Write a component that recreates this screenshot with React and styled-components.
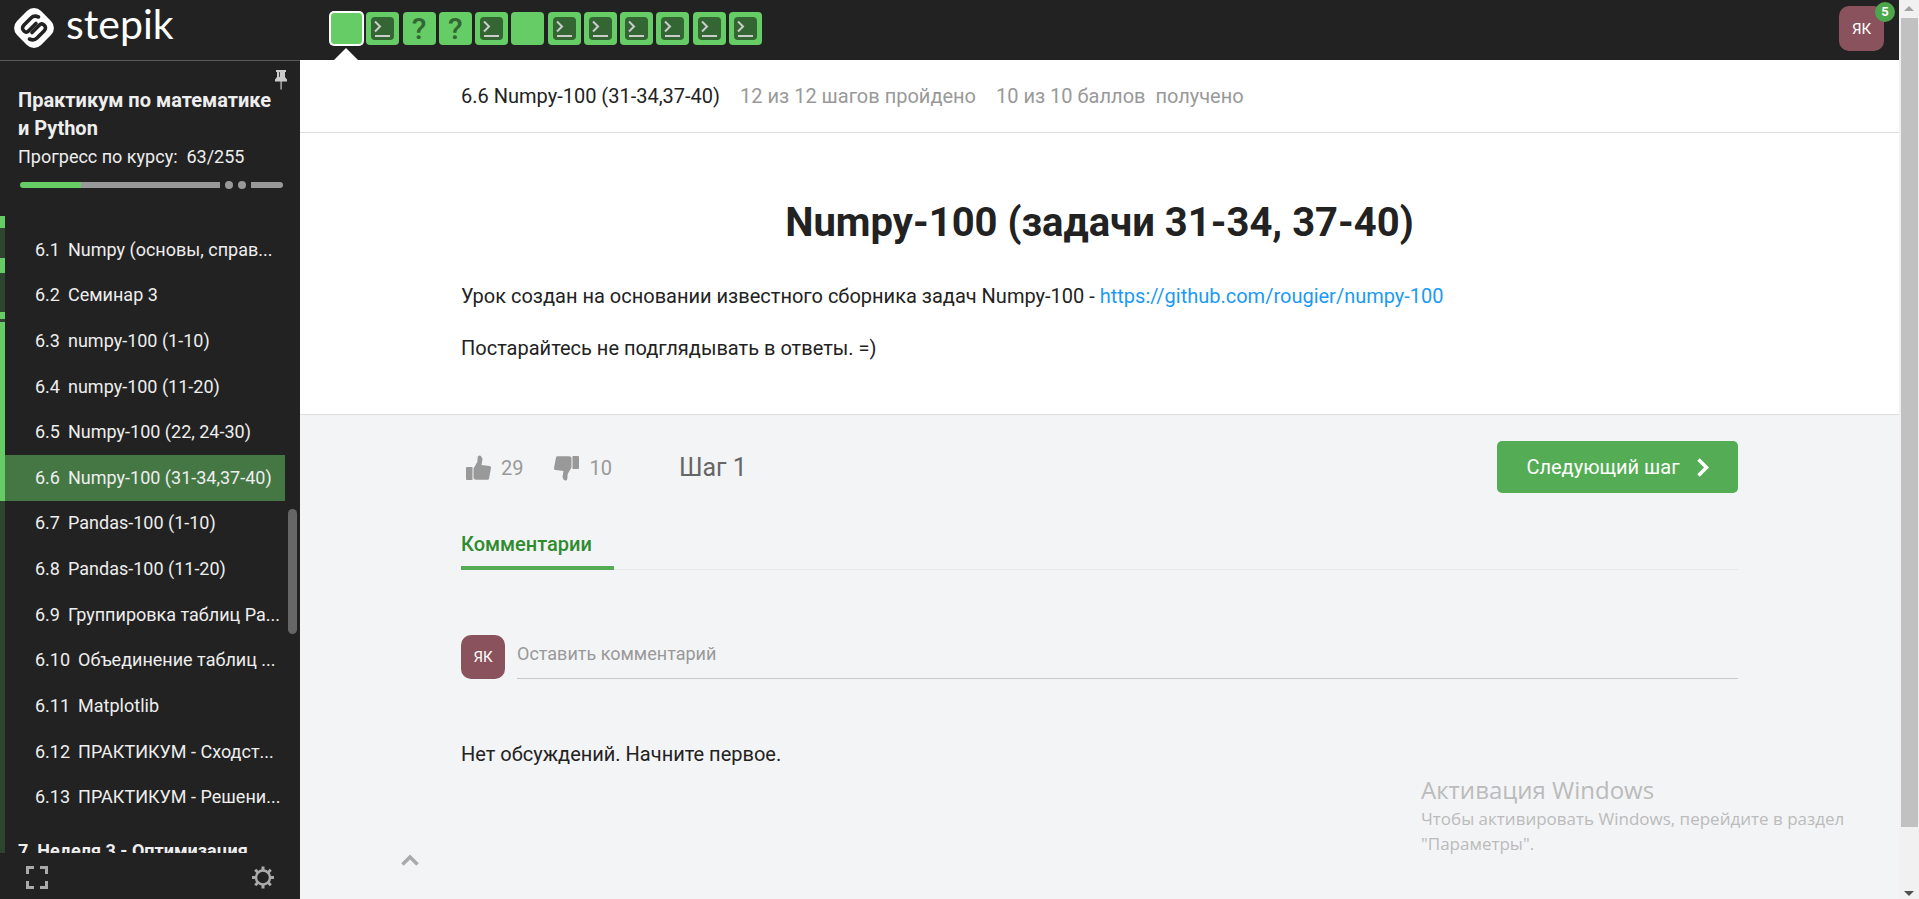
import React from "react";
import styled, { createGlobalStyle, css } from "styled-components";

const GlobalStyle = createGlobalStyle`
  *, *::before, *::after { box-sizing: border-box; }
  body { margin: 0; background: #f3f4f6; color: #222; font: 400 20px/32px Roboto, "Open Sans", sans-serif; }
  button, input { font: inherit; color: inherit; border: 0; background: none; padding: 0; margin: 0; }
  button { cursor: pointer; }
  h1, h2, p, ol { margin: 0; padding: 0; }
  a { text-decoration: none; color: inherit; }
`;

const Page = styled.div`
  display: grid;
  grid-template-columns: 300px minmax(0, 1fr) 20px;
  grid-template-rows: 60px minmax(0, 1fr);
  height: 100vh;
`;

const TopBar = styled.header`
  grid-column: 1 / 3;
  display: flex;
  align-items: flex-start;
  background: #222;
`;

const LogoLink = styled.a`
  display: flex;
  gap: 12px;
  width: 300px;
  padding: 8px 14px;
  color: #fff;
`;

const Wordmark = styled.span`
  font: 400 41px/32px Lato, sans-serif;
`;

const Steps = styled.nav`
  display: flex;
  justify-content: space-between;
  width: 432px;
  margin: 12px 0 0 30px;
`;

const StepLink = styled.a`
  position: relative;
  display: flex;
  align-items: center;
  justify-content: center;
  width: 33px;
  height: 33px;
  border-radius: 4px;
  background: #66cc66;
  color: #336633;
  font-size: 30px;
  font-weight: 500;
  ${(p) =>
    p.$current &&
    css`
      border: 1px solid #fff;
      box-shadow: 0 0 0 1px #fff;
      &::after {
        content: "";
        position: absolute;
        top: 35px;
        left: 3px;
        border: solid transparent;
        border-width: 0 12px 12px;
        border-bottom-color: #fff;
      }
    `}
`;

const Avatar = styled.span`
  position: relative;
  flex: none;
  display: flex;
  align-items: center;
  justify-content: center;
  width: ${(p) => p.$size}px;
  height: ${(p) => p.$size}px;
  border-radius: 10px;
  background: #8a525c;
  color: #fff;
  font-size: 15px;
`;

const ProfileButton = styled.button`
  margin: 6px 15px 0 auto;
`;

const Badge = styled.span`
  position: absolute;
  top: -4px;
  right: -11px;
  width: 20px;
  height: 20px;
  border-radius: 50%;
  background: #4ca64c;
  font-size: 13px;
  line-height: 20px;
  font-weight: 700;
  text-align: center;
`;

const Sidebar = styled.aside`
  display: flex;
  flex-direction: column;
  min-height: 0;
  border-top: 1px solid #5a5a5a;
  background: #222;
  color: #eee;
  font-size: 18px;
`;

const CourseHead = styled.div`
  position: relative;
  padding: 25px 17px 0 18px;
`;

const CourseTitle = styled.h2`
  font-size: 20px;
  line-height: 28px;
  font-weight: 700;
`;

const CourseProgress = styled.p`
  margin-top: 1px;
  line-height: 28px;
`;

const PinButton = styled.button`
  position: absolute;
  top: 9px;
  right: 13px;
  display: flex;
`;

const Meter = styled.div`
  display: flex;
  align-items: center;
  gap: 5px;
  height: 8px;
  margin: 10px 0 27px 2px;
`;

const MeterPart = styled.span`
  flex: ${(p) => (p.$width ? "none" : 1)};
  width: ${(p) => p.$width || 0}px;
  height: 6px;
  border-radius: ${(p) => p.$radius};
  background: ${(p) =>
    p.$done ? "linear-gradient(90deg, #66cc66 61px, #999 61px)" : "#999"};
`;

const MeterDot = styled.span`
  width: 8px;
  height: 8px;
  border-radius: 50%;
  background: #999;
`;

const Contents = styled.div`
  position: relative;
  flex: 1;
  display: flex;
  min-height: 0;
  overflow: hidden;
`;

const Strip = styled.div`
  flex: none;
  display: flex;
  flex-direction: column;
  width: 5px;
`;

const StripPart = styled.span`
  flex: ${(p) => (p.$height ? "none" : 1)};
  height: ${(p) => p.$height || 0}px;
  background: ${(p) => (p.$done ? "#66cc66" : "#2f442f")};
`;

const Outline = styled.div`
  flex: 1;
  padding: 11px 15px 0 0;
`;

const Lessons = styled.ol`
  display: grid;
  grid-template-rows: repeat(13, 1fr);
  height: 593px;
  list-style: none;
`;

const LessonLink = styled.a`
  display: flex;
  align-items: center;
  gap: 8px;
  height: 100%;
  padding-left: 30px;
  white-space: nowrap;
  background: ${(p) => (p.$current ? "#457745" : "transparent")};
`;

const Week = styled.h2`
  margin: 17px 0 0 13px;
  font-size: 18px;
  line-height: 28px;
  font-weight: 700;
  white-space: pre;
`;

const SideThumb = styled.div`
  position: absolute;
  top: 293px;
  right: 3px;
  width: 9px;
  height: 125px;
  border-radius: 5px;
  background: #666;
`;

const SideFoot = styled.div`
  display: flex;
  justify-content: space-between;
  align-items: center;
  height: 46px;
  padding: 2px 26px 0;
  button { display: flex; }
`;

const Main = styled.main`
  position: relative;
  min-width: 0;
  overflow: hidden;
`;

const Wrap = styled.div`
  width: calc(100% - 40px);
  max-width: 1277px;
  margin: 0 auto;
`;

const LessonBar = styled.section`
  background: #fff;
  border-bottom: 1px solid #ddd;
`;

const LessonInfo = styled(Wrap)`
  display: flex;
  align-items: center;
  gap: 20px;
  height: 72px;
`;

const Muted = styled.span`
  color: #999;
  white-space: pre;
`;

const Article = styled.article`
  padding: 66px 0 50px;
  background: #fff;
  border-bottom: 1px solid #ddd;
  p + p { margin-top: 20px; }
`;

const Title = styled.h1`
  margin-bottom: 33px;
  font-size: 40px;
  line-height: 48px;
  font-weight: 700;
  text-align: center;
`;

const TextLink = styled.a`
  color: #1a9af5;
`;

const Actions = styled.div`
  display: flex;
  align-items: center;
  padding-top: 26px;
`;

const Vote = styled.button`
  display: flex;
  align-items: center;
  gap: 10px;
  margin: 0 26px 0 5px;
  padding-top: 2px;
  color: #999;
`;

const StepLabel = styled.span`
  margin-left: 41px;
  padding-top: 2px;
  color: #666;
  font-size: 25px;
`;

const NextButton = styled.button`
  display: flex;
  align-items: center;
  justify-content: center;
  gap: 17px;
  width: 241px;
  height: 52px;
  margin-left: auto;
  border-radius: 5px;
  background: #54ad54;
  color: #fff;
`;

const Tabs = styled.div`
  display: flex;
  margin-top: 39px;
  box-shadow: inset 0 -1px #e6e7e9;
`;

const Tab = styled.button`
  width: 153px;
  padding-bottom: 10px;
  border-bottom: 4px solid #54ad54;
  color: #2e8b2e;
  font-weight: 500;
  line-height: 24px;
  text-align: left;
`;

const CommentForm = styled.form`
  display: flex;
  gap: 12px;
  margin-top: 65px;
`;

const CommentInput = styled.input`
  flex: 1;
  min-width: 0;
  height: 44px;
  padding-bottom: 7px;
  border-bottom: 1px solid #c8c9cb;
  border-radius: 0;
  font-size: 18px;
  &::placeholder { color: #999; opacity: 1; }
`;

const Empty = styled.p`
  margin-top: 63px;
  line-height: 24px;
`;

const ToTop = styled.button`
  position: absolute;
  left: 101px;
  bottom: 33px;
  display: flex;
`;

const Watermark = styled.div`
  position: absolute;
  right: 40px;
  bottom: 43px;
  width: 438px;
  color: #bbb;
  font: 400 17px/25px "Open Sans", "Noto Sans", sans-serif;
  pointer-events: none;
`;

const WatermarkTitle = styled.div`
  font-size: 24px;
  line-height: 33px;
`;

const PageScroll = styled.div`
  grid-column: 3;
  grid-row: 1 / 3;
  display: flex;
  flex-direction: column;
  justify-content: space-between;
  align-items: center;
  background: #f1f1f1;
`;

const ScrollThumb = styled.div`
  width: 17px;
  height: 90%;
  margin-bottom: auto;
  background: #c1c1c1;
`;

const ScrollArrow = styled.svg`
  flex: none;
  width: 20px;
  height: 18px;
  fill: ${(p) => p.$color};
`;

function Logo() {
  return (
    <svg width="40" height="40" viewBox="0 0 40 40" aria-hidden="true">
      <rect x="3" y="3" width="34" height="34" rx="10" fill="#fff" transform="rotate(45 20 20)" />
      <g fill="none" stroke="#222" strokeWidth="3.6" strokeLinecap="round" strokeLinejoin="round">
        <path d="M24.500 9 Q20 7 17 10 L10 17 Q7 20.500 10 23 Q12.500 25.500 15 22.500 L22 15.500" />
        <path d="M15.500 31 Q20 33 23 30 L30 23 Q33 19.500 30 17 Q27.500 14.500 25 17.500 L18 24.500" />
      </g>
    </svg>
  );
}

function PromptIcon() {
  return (
    <svg width="23" height="23" viewBox="0 0 23 23" aria-hidden="true">
      <rect width="23" height="23" rx="4" fill="#336633" />
      <path d="M4 4.5 L9 9.5 L4 14.5" fill="none" stroke="#ccc" strokeWidth="2" />
      <path d="M4 19 H19" stroke="#ccc" strokeWidth="2" />
    </svg>
  );
}

function ThumbIcon({ down }) {
  return (
    <svg width="25" height="26" viewBox="0 0 25 26" fill="#999" aria-hidden="true">
      <g transform={down ? "rotate(180 12.5 13)" : undefined}>
        <path d="M1 12 H6.500 V25 H1 Q0 25 0 24 V13 Q0 12 1 12Z" />
        <path d="M7.500 13.500 L11.300 7 L11.700 2 Q12 .5 13.500 .5 Q15.500 .5 16.500 4 L15.500 10 L23.500 11 Q25.200 11.300 25 13 L23 23.500 Q22.700 24.800 21.500 24.800 H10 Q7.500 24.800 7.500 23Z" />
      </g>
    </svg>
  );
}

function PinIcon() {
  return (
    <svg width="12" height="20" viewBox="0 0 12 20" fill="#ccc" aria-hidden="true">
      <path d="M1 0 H11 V2 H10 V7 L12 9.500 V11.500 H0 V9.500 L2 7 V2 H1Z" />
      <path d="M5.500 11 H6.700 V19.500 H5.500Z" />
      <path d="M4 2 H5 V7 H4Z" fill="#444" />
    </svg>
  );
}

function FullscreenIcon() {
  return (
    <svg width="22" height="23" viewBox="0 0 22 23" fill="none" stroke="#aaa" strokeWidth="3" aria-hidden="true">
      <path d="M1.500 8 V1.500 H8 M14 1.500 H20.500 V8 M20.500 15 V21.500 H14 M8 21.500 H1.500 V15" />
    </svg>
  );
}

function GearIcon() {
  return (
    <svg width="22" height="23" viewBox="0 0 22 23" fill="none" stroke="#aaa" aria-hidden="true">
      <circle cx="11" cy="11.500" r="7" strokeWidth="2.500" />
      {[0, 45, 90, 135, 180, 225, 270, 315].map((a) => (
        <path key={a} d="M11 .5 V4" strokeWidth="3" transform={`rotate(${a} 11 11.500)`} />
      ))}
    </svg>
  );
}

const steps = ["text", "code", "quiz", "quiz", "code", "text", "code", "code", "code", "code", "code", "code"];

const lessons = [
  ["6.1", "Numpy (основы, справ..."],
  ["6.2", "Семинар 3"],
  ["6.3", "numpy-100 (1-10)"],
  ["6.4", "numpy-100 (11-20)"],
  ["6.5", "Numpy-100 (22, 24-30)"],
  ["6.6", "Numpy-100 (31-34,37-40)"],
  ["6.7", "Pandas-100 (1-10)"],
  ["6.8", "Pandas-100 (11-20)"],
  ["6.9", "Группировка таблиц Pa..."],
  ["6.10", "Объединение таблиц ..."],
  ["6.11", "Matplotlib"],
  ["6.12", "ПРАКТИКУМ - Сходст..."],
  ["6.13", "ПРАКТИКУМ - Решени..."],
];

const strip = [
  [12, true],
  [30, false],
  [15, true],
  [39, false],
  [7, true],
  [3, false],
  [179, true],
  [0, false],
];

export default function App() {
  return (
    <Page>
      <GlobalStyle />
      <TopBar>
        <LogoLink href="#home">
          <Logo />
          <Wordmark>stepik</Wordmark>
        </LogoLink>
        <Steps aria-label="Шаги урока">
          {steps.map((kind, i) => (
            <StepLink key={i} href={`#step-${i + 1}`} $current={i === 0} aria-label={`Шаг ${i + 1}`}>
              {kind === "code" && <PromptIcon />}
              {kind === "quiz" && "?"}
            </StepLink>
          ))}
        </Steps>
        <ProfileButton aria-label="Профиль">
          <Avatar $size={45}>
            ЯК<Badge>5</Badge>
          </Avatar>
        </ProfileButton>
      </TopBar>

      <Sidebar>
        <CourseHead>
          <CourseTitle>Практикум по математике и Python</CourseTitle>
          <PinButton aria-label="Закрепить">
            <PinIcon />
          </PinButton>
          <CourseProgress>Прогресс по курсу: &nbsp;63/255</CourseProgress>
          <Meter>
            <MeterPart $done $radius="3px 0 0 3px" />
            <MeterDot />
            <MeterDot />
            <MeterPart $width={32} $radius="0 3px 3px 0" />
          </Meter>
        </CourseHead>
        <Contents>
          <Strip>
            {strip.map(([height, done], i) => (
              <StripPart key={i} $height={height} $done={done} />
            ))}
          </Strip>
          <Outline>
            <Lessons>
              {lessons.map(([number, name]) => (
                <li key={number}>
                  <LessonLink href={`#lesson-${number}`} $current={number === "6.6"}>
                    <span>{number}</span>
                    <span>{name}</span>
                  </LessonLink>
                </li>
              ))}
            </Lessons>
            <Week>7  Неделя 3 - Оптимизация</Week>
          </Outline>
          <SideThumb />
        </Contents>
        <SideFoot>
          <button aria-label="Полный экран">
            <FullscreenIcon />
          </button>
          <button aria-label="Настройки">
            <GearIcon />
          </button>
        </SideFoot>
      </Sidebar>

      <Main>
        <LessonBar>
          <LessonInfo>
            <span>6.6 Numpy-100 (31-34,37-40)</span>
            <Muted>12 из 12 шагов пройдено</Muted>
            <Muted>10 из 10 баллов  получено</Muted>
          </LessonInfo>
        </LessonBar>
        <Article>
          <Wrap>
            <Title>Numpy-100 (задачи 31-34, 37-40)</Title>
            <p>
              Урок создан на основании известного сборника задач Numpy-100 -{" "}
              <TextLink href="https://github.com/rougier/numpy-100">https://github.com/rougier/numpy-100</TextLink>
            </p>
            <p>Постарайтесь не подглядывать в ответы. =)</p>
          </Wrap>
        </Article>
        <Wrap>
          <Actions>
            <Vote aria-label="Нравится">
              <ThumbIcon />
              29
            </Vote>
            <Vote aria-label="Не нравится">
              <ThumbIcon down />
              10
            </Vote>
            <StepLabel>Шаг 1</StepLabel>
            <NextButton>
              Следующий шаг
              <svg width="12" height="19" viewBox="0 0 12 19" fill="none" stroke="#fff" strokeWidth="3.500" aria-hidden="true">
                <path d="M1.500 1.500 L9.500 9.500 L1.500 17.500" />
              </svg>
            </NextButton>
          </Actions>
          <Tabs role="tablist">
            <Tab role="tab" aria-selected="true">Комментарии</Tab>
          </Tabs>
          <CommentForm>
            <Avatar $size={44}>ЯК</Avatar>
            <CommentInput aria-label="Оставить комментарий" placeholder="Оставить комментарий" />
          </CommentForm>
          <Empty>Нет обсуждений. Начните первое.</Empty>
        </Wrap>
        <ToTop aria-label="Наверх">
          <svg width="18" height="12" viewBox="0 0 18 12" fill="none" stroke="#aaa" strokeWidth="3.500" aria-hidden="true">
            <path d="M1.500 10.500 L9 3 L16.500 10.500" />
          </svg>
        </ToTop>
        <Watermark>
          <WatermarkTitle>Активация Windows</WatermarkTitle>
          Чтобы активировать Windows, перейдите в раздел "Параметры".
        </Watermark>
      </Main>

      <PageScroll aria-hidden="true">
        <ScrollArrow $color="#a3a3a3" viewBox="0 0 20 18">
          <path d="M5 11 L10 6 L15 11Z" />
        </ScrollArrow>
        <ScrollThumb />
        <ScrollArrow $color="#505050" viewBox="0 0 20 18">
          <path d="M5 10 L10 15 L15 10Z" />
        </ScrollArrow>
      </PageScroll>
    </Page>
  );
}
